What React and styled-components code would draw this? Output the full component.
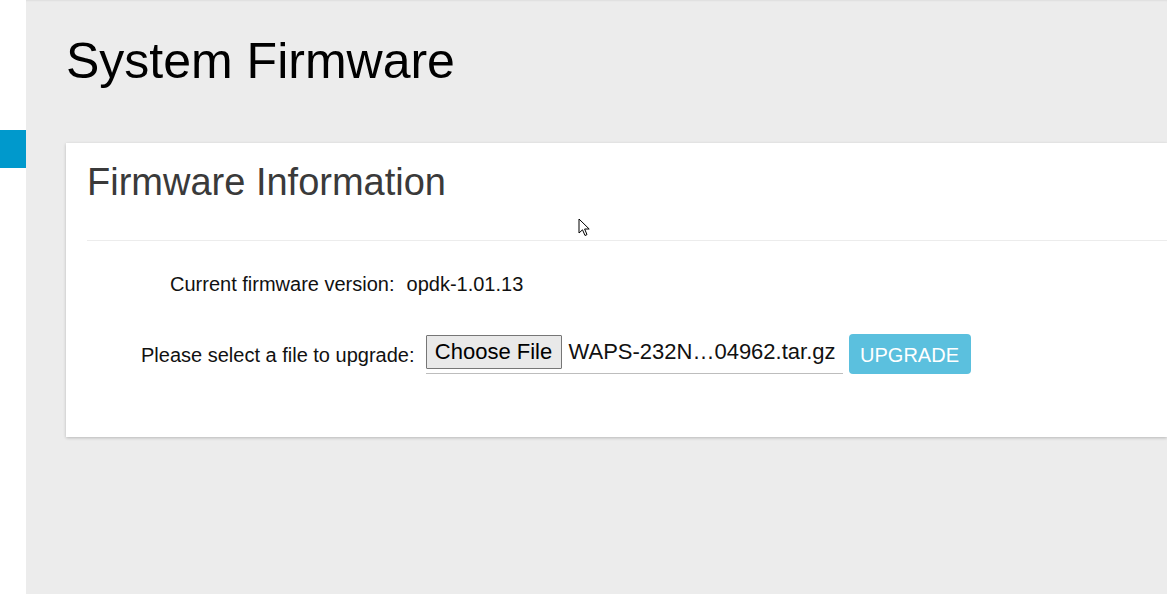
import React from "react";
import styled, { createGlobalStyle } from "styled-components";

const GlobalStyle = createGlobalStyle`
  html, body { margin: 0; padding: 0; height: 100%; }
  body {
    font-family: "Liberation Sans", Arial, sans-serif;
    overflow: hidden;
    background: #ececec;
  }
  #root { height: 100%; }
`;

const Page = styled.div`
  display: flex;
  height: 594px;
  overflow: hidden;
  position: relative;
`;

const Sidebar = styled.nav`
  width: 26px;
  flex: 0 0 26px;
  background: #ffffff;
  padding-top: 130px;
  box-sizing: border-box;
`;

const ActiveMarker = styled.div`
  height: 38px;
  background: #0099cc;
`;

const Main = styled.main`
  flex: 1;
  background: #ececec;
  padding-left: 40px;
  box-shadow: inset 0 2px 2px -1px rgba(0, 0, 0, 0.06);
  min-width: 0;
`;

const PageTitle = styled.h1`
  margin: 36px 0 0 0;
  font-size: 50px;
  line-height: 50px;
  font-weight: normal;
  color: #000;
`;

const Card = styled.section`
  margin-top: 57px;
  background: #fff;
  padding: 20px 0 0 21px;
  height: 294px;
  box-sizing: border-box;
  box-shadow: 0 1px 3px rgba(0, 0, 0, 0.22);
`;

const CardTitle = styled.h2`
  margin: 0;
  font-size: 38px;
  line-height: 38px;
  font-weight: normal;
  color: #3a3a3a;
`;

const Divider = styled.hr`
  margin: 39px 0 0 0;
  border: 0;
  height: 1px;
  background: #ececec;
`;

const Row = styled.div`
  display: flex;
  align-items: flex-start;
  margin-left: ${(p) => p.$indent}px;
  margin-top: ${(p) => p.$top}px;
  gap: ${(p) => p.$gap}px;
  font-size: 20px;
  line-height: 24px;
  color: #111;
`;

const Label = styled.span`
  margin-top: ${(p) => p.$offset || 0}px;
`;

const FileField = styled.label`
  display: flex;
  align-items: flex-start;
  gap: 7px;
  width: 417px;
  margin-top: 1px;
  padding-bottom: 4px;
  border-bottom: 1px solid #bdbdbd;
  cursor: pointer;
`;

const ChooseButton = styled.span`
  width: 136px;
  height: 34px;
  box-sizing: border-box;
  border: 1px solid #767676;
  background: #e9e9e9;
  border-radius: 1px;
  font-size: 22px;
  line-height: 32px;
  text-align: center;
  color: #000;
  white-space: nowrap;
`;

const FileName = styled.span`
  font-size: 22px;
  line-height: 34px;
  color: #111;
  white-space: nowrap;
`;

const UpgradeButton = styled.button`
  width: 122px;
  height: 40px;
  box-sizing: border-box;
  border: 0;
  border-radius: 4px;
  background: #5bc0de;
  color: #fff;
  font-family: "Liberation Sans", Arial, sans-serif;
  font-size: 20px;
  line-height: 38px;
  padding: 2px 0 0 0;
  text-align: center;
`;

const Cursor = styled.svg`
  position: absolute;
  left: 578px;
  top: 218px;
  pointer-events: none;
`;

export default function App() {
  return (
    <>
      <GlobalStyle />
      <Page>
        <Sidebar>
          <ActiveMarker />
        </Sidebar>
        <Main>
          <PageTitle>System Firmware</PageTitle>
          <Card>
            <CardTitle>Firmware Information</CardTitle>
            <Divider />
            <Row $indent={83} $top={31} $gap={12}>
              <Label>Current firmware version:</Label>
              <span>opdk-1.01.13</span>
            </Row>
            <Row $indent={54} $top={38} $gap={11}>
              <Label $offset={9}>Please select a file to upgrade:</Label>
              <Row $indent={0} $top={0} $gap={6}>
                <FileField>
                  <ChooseButton>Choose File</ChooseButton>
                  <FileName>WAPS-232N…04962.tar.gz</FileName>
                </FileField>
                <UpgradeButton type="button">UPGRADE</UpgradeButton>
              </Row>
            </Row>
          </Card>
        </Main>
        <Cursor width="13" height="20" viewBox="0 0 13 20">
          <path
            d="M1 1 L1 15 L4.5 11.8 L7 17.5 L9 16.6 L6.6 11 L11.2 11 Z"
            fill="#fff"
            stroke="#000"
            strokeWidth="1"
            strokeLinejoin="miter"
          />
        </Cursor>
      </Page>
    </>
  );
}
